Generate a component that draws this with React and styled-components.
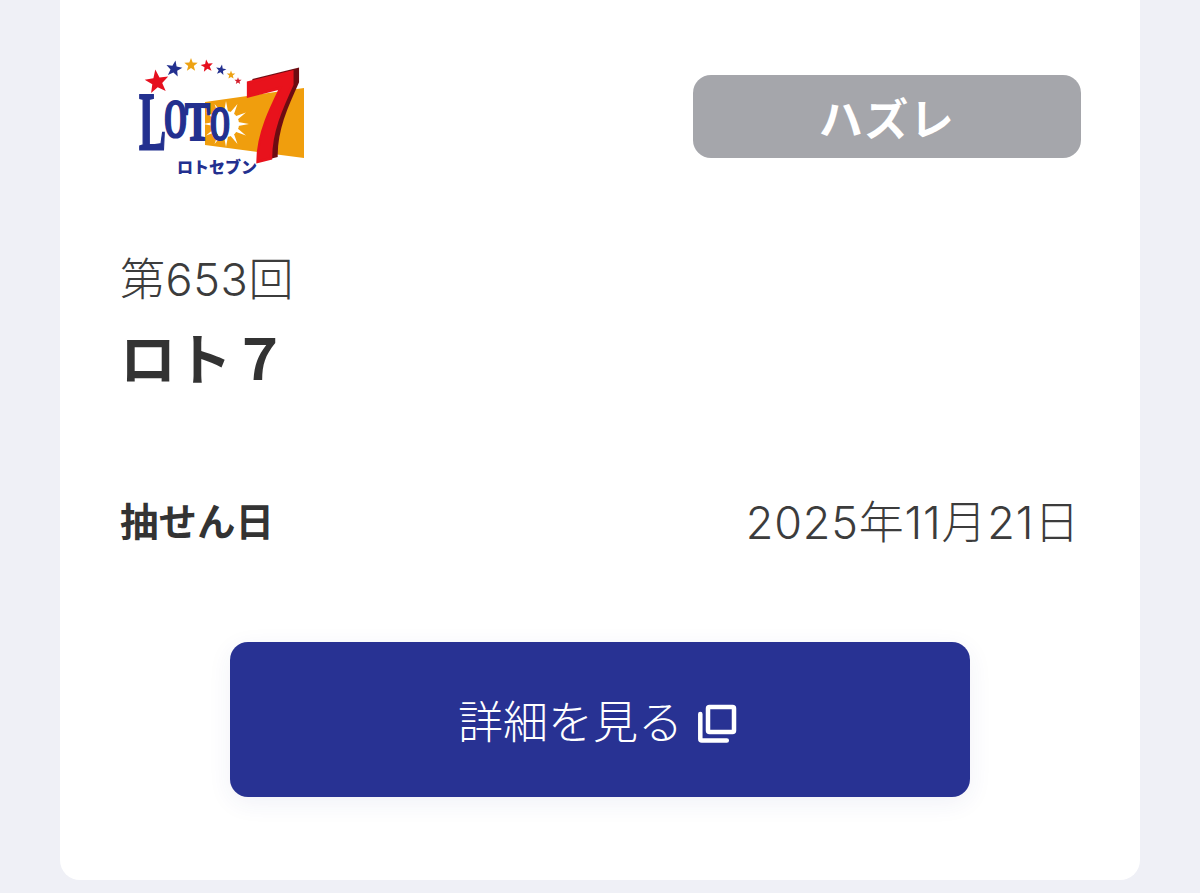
import React from 'react';
import styled, { createGlobalStyle } from 'styled-components';

const GlobalStyle = createGlobalStyle`
  html, body { margin: 0; padding: 0; }
  body {
    background: #eff0f6;
    font-family: "Inter", "Noto Sans CJK JP", sans-serif;
    color: #333;
  }
`;

const Page = styled.div`
  box-sizing: border-box;
  height: 893px;
  padding: 0 60px 13px;
  display: flex;
  flex-direction: column;
  justify-content: flex-end;
  overflow: hidden;
`;

const Card = styled.section`
  flex-shrink: 0;
  padding: 100px 60px 83px;
  background: #fff;
  border-radius: 20px;
`;

const Header = styled.div`
  display: flex;
  justify-content: space-between;
  align-items: center;
  height: 150px;
`;

const LogoSvg = styled.svg`
  flex-shrink: 0;
  overflow: visible;
`;

const Badge = styled.div`
  width: 388px;
  height: 83px;
  margin-right: -1px;
  margin-top: 3px;
  display: flex;
  align-items: center;
  justify-content: center;
  border-radius: 18px;
  background: #a5a6ab;
  color: #fff;
  font-size: 44px;
  font-weight: 700;
  letter-spacing: 1.5px;
`;

const Round = styled.div`
  margin-top: 60px;
  font-size: 45px;
  line-height: 60px;
  font-weight: 300;
  letter-spacing: 0.6px;
  color: #3c3c3c;
`;

const Title = styled.h2`
  margin: 15px 0 0;
  font-size: 56px;
  line-height: 70px;
  font-weight: 700;
  color: #333;
`;

const InfoRow = styled.div`
  margin-top: 94px;
  height: 60px;
  display: flex;
  justify-content: space-between;
  align-items: center;
`;

const InfoLabel = styled.span`
  font-size: 38.5px;
  font-weight: 700;
`;

const InfoValue = styled.span`
  font-size: 45px;
  font-weight: 300;
  letter-spacing: 0.8px;
  color: #3c3c3c;
`;

const DetailButton = styled.button`
  display: flex;
  align-items: center;
  justify-content: center;
  gap: 15px;
  width: 740px;
  height: 155px;
  margin: 93px auto 0;
  padding: 0 5px 0 0;
  border: 0;
  border-radius: 18px;
  background: #283293;
  color: #fff;
  font-family: inherit;
  font-size: 45px;
  font-weight: 300;
  box-shadow: 0 6px 24px rgba(40, 50, 147, 0.07);
`;

const IconSvg = styled.svg`
  margin-top: 8px;
`;

const starPoints = (cx, cy, r, rot = 0) =>
  Array.from({ length: 10 }, (_, i) => {
    const a = ((i * 36 + rot - 90) * Math.PI) / 180;
    const d = i % 2 === 0 ? r : r * 0.42;
    return `${(cx + d * Math.cos(a)).toFixed(1)},${(cy + d * Math.sin(a)).toFixed(1)}`;
  }).join(' ');

const stars = [
  [37, 42, 12.5, '#e60f1e', -8],
  [54, 29, 8.5, '#23308f', 10],
  [71, 25, 7, '#eda213', 0],
  [87, 26, 6.5, '#e60f1e', -8],
  [101, 30, 5.5, '#23308f', 10],
  [111, 35, 4.5, '#eda213', 0],
  [118, 41, 3.8, '#d31c2a', 0],
];

const rays = Array.from({ length: 12 }, (_, i) => {
  const a = (i * 30 * Math.PI) / 180;
  const b = ((i * 30 + 12) * Math.PI) / 180;
  const c = ((i * 30 - 12) * Math.PI) / 180;
  const cx = 106;
  const cy = 84;
  return `${cx + 23 * Math.cos(a)},${cy + 23 * Math.sin(a)} ${cx + 11 * Math.cos(b)},${cy + 11 * Math.sin(b)} ${cx + 11 * Math.cos(c)},${cy + 11 * Math.sin(c)}`;
});

const LogoLetter = ({ x, y, w, size, children }) => (
  <text
    x={x}
    y={y}
    textLength={w}
    lengthAdjust="spacingAndGlyphs"
    fontFamily="'Liberation Serif', serif"
    fontWeight="700"
    fontSize={size}
    fill="#23308f"
    stroke="#23308f"
    strokeWidth="2.2"
  >
    {children}
  </text>
);

const Loto7Logo = () => (
  <LogoSvg width="200" height="150" viewBox="0 0 200 150" aria-label="LOTO7">
    {stars.map(([x, y, r, fill, rot]) => (
      <polygon key={x} points={starPoints(x, y, r, rot)} fill={fill} />
    ))}
    <polygon points="85,62 184,48 184,118 85,105" fill="#f09e0d" />
    <circle cx="106" cy="84" r="13" fill="#fff" />
    {rays.map((p) => (
      <polygon key={p} points={p} fill="#fff" />
    ))}
    <LogoLetter x={19} y={109} w={27} size={82}>L</LogoLetter>
    <LogoLetter x={44} y={97} w={23} size={55}>O</LogoLetter>
    <LogoLetter x={65} y={100} w={25} size={54}>T</LogoLetter>
    <LogoLetter x={90} y={100} w={20} size={48}>O</LogoLetter>
    <g transform="translate(124 125) skewY(-14) scale(0.8 1)">
      <text x="7" y="-1" fontFamily="'Liberation Sans', sans-serif" fontWeight="700" fontSize="118" fill="#6e0c12" stroke="#6e0c12" strokeWidth="3">7</text>
      <text x="0" y="0" fontFamily="'Liberation Sans', sans-serif" fontWeight="700" fontSize="118" fill="#e8121c" stroke="#e8121c" strokeWidth="3">7</text>
    </g>
    <text
      x="57"
      y="133"
      textLength="80"
      lengthAdjust="spacingAndGlyphs"
      fontFamily="'Noto Sans CJK JP', sans-serif"
      fontWeight="900"
      fontSize="16"
      fill="#23308f"
    >
      ロトセブン
    </text>
  </LogoSvg>
);

const CopyIcon = () => (
  <IconSvg width="39" height="39" viewBox="0 0 39 39" fill="none" stroke="#fff" strokeWidth="4.5">
    <rect x="10" y="3" width="26" height="25" rx="1.5" />
    <path d="M2.3 10v25a1.5 1.5 0 0 0 1.5 1.5h25" strokeLinecap="round" />
  </IconSvg>
);

export default function App() {
  return (
    <Page>
      <GlobalStyle />
      <Card>
        <Header>
          <Loto7Logo />
          <Badge>ハズレ</Badge>
        </Header>
        <Round>第653回</Round>
        <Title>ロト７</Title>
        <InfoRow>
          <InfoLabel>抽せん日</InfoLabel>
          <InfoValue>2025年11月21日</InfoValue>
        </InfoRow>
        <DetailButton>
          詳細を見る
          <CopyIcon />
        </DetailButton>
      </Card>
    </Page>
  );
}
